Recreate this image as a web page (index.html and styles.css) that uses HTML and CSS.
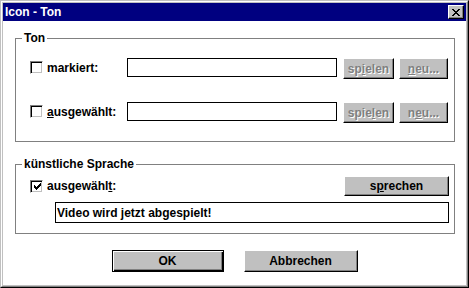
FILE: index.html
```html
<!DOCTYPE html>
<html>
<head>
    <title>Icon - Ton</title>
    <meta charset="utf-8">
    <link rel="stylesheet" href="styles.css">
</head>

<body>

    <div class="window">
        <div class="frame">
            <div class="titlebar">
                <span class="title">Icon - Ton</span>
                <button class="close" type="button">
                    <svg width="8" height="7" viewBox="0 0 8 7" shape-rendering="crispEdges">
                        <rect x="0" y="0" width="2" height="1"/><rect x="6" y="0" width="2" height="1"/>
                        <rect x="1" y="1" width="2" height="1"/><rect x="5" y="1" width="2" height="1"/>
                        <rect x="2" y="2" width="4" height="1"/>
                        <rect x="3" y="3" width="2" height="1"/>
                        <rect x="2" y="4" width="4" height="1"/>
                        <rect x="1" y="5" width="2" height="1"/><rect x="5" y="5" width="2" height="1"/>
                        <rect x="0" y="6" width="2" height="1"/><rect x="6" y="6" width="2" height="1"/>
                    </svg>
                </button>
            </div>

            <div class="client">
                <!-- Ton -->
                <fieldset class="group">
                    <legend>Ton</legend>
                    <div class="group-body ton">
                        <div class="row">
                            <label class="check-label"><span class="check"></span>markiert:</label>
                            <input type="text" class="field">
                            <button type="button" class="btn small spielen" disabled>sp<u>i</u>elen</button>
                            <button type="button" class="btn small neu" disabled><u>n</u>eu...</button>
                        </div>
                        <div class="row second">
                            <label class="check-label"><span class="check"></span><u>a</u>usgewählt:</label>
                            <input type="text" class="field">
                            <button type="button" class="btn small spielen" disabled>spie<u>l</u>en</button>
                            <button type="button" class="btn small neu" disabled>n<u>e</u>u...</button>
                        </div>
                    </div>
                </fieldset>

                <!-- künstliche Sprache -->
                <fieldset class="group speech">
                    <legend>künstliche Sprache</legend>
                    <div class="group-body">
                        <div class="speech-row">
                            <label class="check-label"><span class="check checked">
                                <svg width="7" height="7" viewBox="0 0 7 7" shape-rendering="crispEdges">
                                    <rect x="0" y="2" width="1" height="3"/>
                                    <rect x="1" y="3" width="1" height="3"/>
                                    <rect x="2" y="4" width="1" height="3"/>
                                    <rect x="3" y="3" width="1" height="3"/>
                                    <rect x="4" y="2" width="1" height="3"/>
                                    <rect x="5" y="1" width="1" height="3"/>
                                    <rect x="6" y="0" width="1" height="3"/>
                                </svg>
                            </span>ausgewähl<u>t</u>:</label>
                            <button type="button" class="btn speak">s<u>p</u>rechen</button>
                        </div>
                        <input type="text" class="field speech-text" value="Video wird jetzt abgespielt!">
                    </div>
                </fieldset>

                <div class="actions">
                    <button type="button" class="btn default ok">OK</button>
                    <button type="button" class="btn cancel">Abbrechen</button>
                </div>
            </div>
        </div>
    </div>

</body>
</html>
```

FILE: styles.css
```css
body {
    margin: 0;
    font-family: "Liberation Sans", Arial, sans-serif;
    font-size: 12px;
    font-weight: bold;
}

.window {
    width: 469px;
    height: 288px;
    box-sizing: border-box;
    border: 1px solid;
    border-color: #c0c0c0 #000 #000 #c0c0c0;
}

.frame {
    height: 100%;
    box-sizing: border-box;
    border: 1px solid;
    border-color: #fff #808080 #808080 #fff;
    padding: 1px;
    background-color: #c0c0c0;
    display: flex;
    flex-direction: column;
}

.titlebar {
    height: 18px;
    background-color: #000080;
    color: #fff;
    display: flex;
    align-items: center;
    justify-content: space-between;
    padding: 0 2px 0 2px;
}

.title {
    font-size: 12px;
}

.close {
    width: 16px;
    height: 14px;
    padding: 0;
    box-sizing: border-box;
    background-color: #c0c0c0;
    border: 1px solid;
    border-color: #fff #000 #000 #fff;
    box-shadow: inset -1px -1px #808080;
    display: flex;
    align-items: center;
    justify-content: center;
}

.client {
    flex: 1;
    background-color: #fff;
    padding: 10px 0 0 12px;
}

.group {
    width: 440px;
    box-sizing: border-box;
    margin: 0;
    padding: 0;
    border: 1px solid #808080;
    min-width: 0;
}

.group legend {
    margin-left: 6px;
    padding: 0 2px;
    line-height: 14px;
}

.group-body {
    padding: 13px 0 18px 15px;
}

.row {
    display: flex;
    align-items: flex-start;
}

.row.second {
    margin-top: 23px;
}

.check-label {
    display: flex;
    align-items: center;
    width: 96px;
    height: 19px;
}

.check {
    width: 13px;
    height: 13px;
    box-sizing: border-box;
    border: 1px solid;
    border-color: #808080 #fff #fff #808080;
    box-shadow: inset 1px 1px #000, inset -1px -1px #c0c0c0;
    margin-right: 4px;
    display: flex;
    align-items: center;
    justify-content: center;
    margin-left: -1px;
}

.check svg {
    margin: 1px 0 0 1px;
}

.field {
    width: 210px;
    height: 19px;
    box-sizing: border-box;
    border: 1px solid #000;
    padding: 0 1px;
    margin: 0;
    font: inherit;
    color: #000;
    outline: none;
}

.btn {
    height: 21px;
    box-sizing: border-box;
    padding: 0;
    margin: 0;
    font: inherit;
    color: #000;
    background-color: #c0c0c0;
    border: 1px solid;
    border-color: #fff #000 #000 #fff;
    box-shadow: inset -1px -1px #808080;
}

.btn:disabled {
    color: #808080;
    text-shadow: 1px 1px #fff;
}

.spielen {
    width: 51px;
    margin-left: 6px;
}

.neu {
    width: 49px;
    margin-left: 5px;
}

.speech {
    margin-top: 15px;
}

.speech .group-body {
    padding: 5px 5px 10px 15px;
}

.speech-row {
    display: flex;
    align-items: center;
    justify-content: space-between;
}

.speech-row .check-label {
    height: 20px;
}

.speak {
    width: 105px;
    height: 20px;
}

.speech-text {
    display: block;
    width: 394px;
    height: 21px;
    margin: 6px 0 0 24px;
}

.actions {
    display: flex;
    justify-content: center;
    gap: 20px;
    margin: 16px 0 0 -12px;
}

.ok {
    width: 112px;
    height: 22px;
}

.cancel {
    width: 114px;
    height: 22px;
}

.btn.default {
    border-color: #000;
    box-shadow: inset 1px 1px #fff, inset -1px -1px #000, inset -2px -2px #808080;
}
```
